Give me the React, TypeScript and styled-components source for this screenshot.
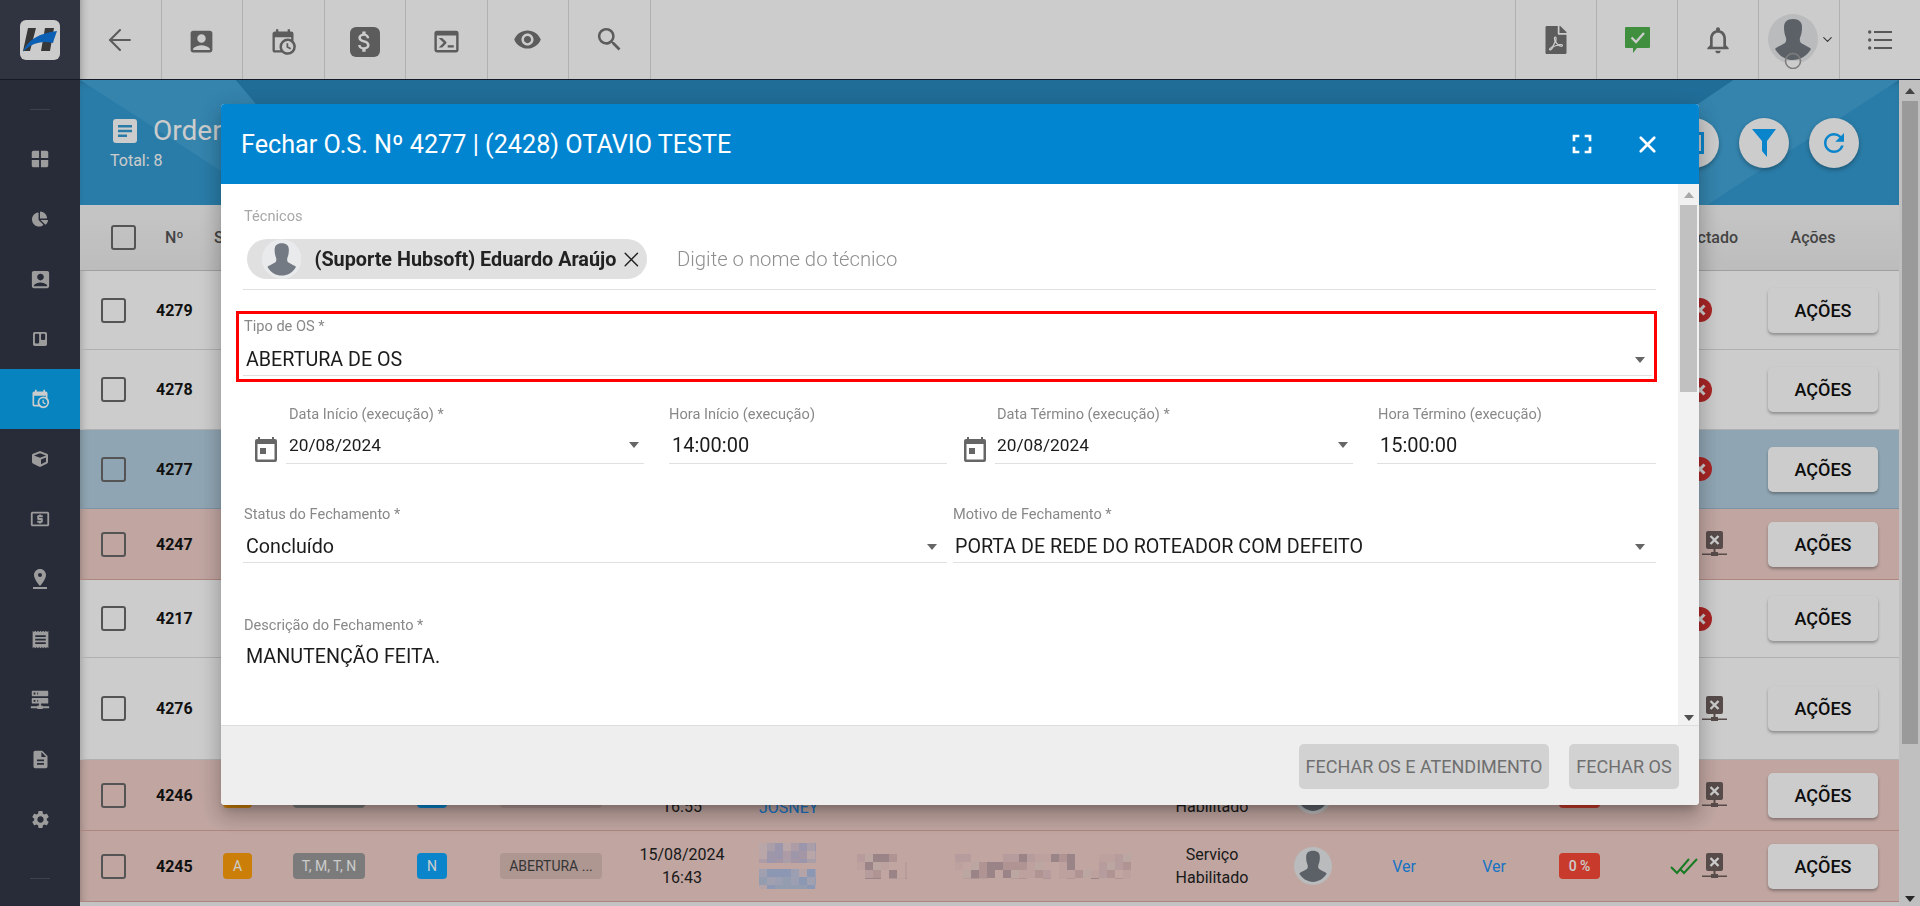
import React from 'react'
import styled, {createGlobalStyle} from 'styled-components'
import {ArrowLeft, ChevronDown, X} from 'lucide-react'
import {
    MdAccountBox, MdVisibility, MdWindow, MdLocalAtm, MdPinDrop, MdReceipt, MdSearch, MdNotificationsNone,
    MdDescription, MdSettings, MdFullscreen, MdRefresh, MdAttachMoney
} from 'react-icons/md'
import {FaChartPie, FaTrello, FaCube, FaFilePdf} from 'react-icons/fa'

const GlobalStyle = createGlobalStyle`
    * { box-sizing: border-box; }
    html, body { margin: 0; padding: 0; height: 100%; overflow: hidden; }
    body { font-family: Roboto, "Liberation Sans", sans-serif; color: #111; background: #fff; }
`

const CALENDAR_CLOCK = 'M15,13H16.5V15.82L18.94,17.23L18.19,18.53L15,16.69V13M19,8H5V19H9.67C9.24,18.09 9,17.07 9,16A7,7 0 0,1 16,9C17.07,9 18.09,9.24 19,9.67V8M5,21C3.89,21 3,20.1 3,19V5C3,3.89 3.89,3 5,3H6V1H8V3H16V1H18V3H19A2,2 0 0,1 21,5V11.1C22.24,12.36 23,14.09 23,16A7,7 0 0,1 16,23C14.09,23 12.36,22.24 11.1,21H5M16,11.15A4.85,4.85 0 0,0 11.15,16C11.15,18.68 13.32,20.85 16,20.85A4.85,4.85 0 0,0 20.85,16C20.85,13.32 18.68,11.15 16,11.15Z'
const CONSOLE = 'M20,19V7H4V19H20M20,3A2,2 0 0,1 22,5V19A2,2 0 0,1 20,21H4A2,2 0 0,1 2,19V5C2,3.89 2.9,3 4,3H20M13,17V15H18V17H13M9.58,13L5.57,9H8.4L11.7,12.3C12.09,12.69 12.09,13.33 11.7,13.72L8.42,17H5.59L9.58,13Z'
const SERVER_NETWORK = 'M13,19H14A1,1 0 0,1 15,20H22V22H15A1,1 0 0,1 14,23H10A1,1 0 0,1 9,22H2V20H9A1,1 0 0,1 10,19H11V17H4A1,1 0 0,1 3,16V12A1,1 0 0,1 4,11H20A1,1 0 0,1 21,12V16A1,1 0 0,1 20,17H13V19M4,3H20A1,1 0 0,1 21,4V8A1,1 0 0,1 20,9H4A1,1 0 0,1 3,8V4A1,1 0 0,1 4,3M9,7H10V5H9V7M9,15H10V13H9V15M5,5V7H7V5H5M5,13V15H7V13H5Z'
const SILHOUETTE = 'M25 5c-6 0-9 3-9 8 0 2 0 4 .5 6 .3 2 1 3 1.5 5 .5 2 0 4-1 5-3 2-6 3-9 5l-1 1c4 7 11 11 18 11s14-4 18-11l-1-1c-3-2-6-3-9-5-1-1-1.5-3-1-5 .5-2 1.2-3 1.5-5 .5-2 .5-4 .5-6 0-5-3-8-9-8z'

function MdiIcon({d, size}: {d: string; size: number}) {
    return <svg width={size} height={size} viewBox="0 0 24 24" fill="currentColor"><path d={d} /></svg>
}

function Logo() {
    return (
        <svg width="40" height="40" viewBox="0 0 40 40">
            <rect width="40" height="40" rx="6" fill="#fff" />
            <path d="M8 8h8l-6 23H3zM25 8h9l-4 23h-9z" fill="#454545" />
            <path d="M3 32C7 20 20 13 37 11 36 14 34 19 33 23 22 20 11 23 3 32Z" fill="#0f78e0" />
        </svg>
    )
}

function Avatar({size, ring}: {size: number; ring?: boolean}) {
    return (
        <svg width={size} height={ring ? size + 5 : size} viewBox={ring ? '0 0 50 55' : '0 0 50 50'}>
            <circle cx="25" cy="25" r="25" fill="#e8eaec" />
            <clipPath id={ring ? 'av-ring' : 'av-plain'}><circle cx="25" cy="25" r="25" /></clipPath>
            <path d={SILHOUETTE} fill="#747a83" clipPath={`url(#${ring ? 'av-ring' : 'av-plain'})`} />
            {ring && <path d="M17 47a8 8 0 0 0 16 0z" fill="#fff" />}
            {ring && <circle cx="25" cy="47" r="7.500" fill="none" stroke="#9d9d9d" strokeWidth="1.6" />}
        </svg>
    )
}

function ChatCheck() {
    return (
        <svg width="25" height="26" viewBox="0 0 25 26">
            <path d="M1 0h23a1 1 0 0 1 1 1v19a1 1 0 0 1-1 1H12l-4 5v-5H1a1 1 0 0 1-1-1V1a1 1 0 0 1 1-1z" fill="#4fb34f" />
            <path d="M6.500 10.500l4.500 4.500 8-9" fill="none" stroke="#fff" strokeWidth="2.4" />
        </svg>
    )
}

function Dollar() {
    return <DollarBox><MdAttachMoney size={27} /></DollarBox>
}

function ListIcon() {
    return (
        <svg width="24" height="20" viewBox="0 0 24 20" fill="#6e6e6e">
            <circle cx="1.7" cy="2" r="1.7" /><circle cx="1.7" cy="10" r="1.7" /><circle cx="1.7" cy="18" r="1.7" />
            <rect x="6" y="1" width="18" height="2" /><rect x="6" y="9" width="18" height="2" /><rect x="6" y="17" width="18" height="2" />
        </svg>
    )
}

function DocBadge() {
    return (
        <svg width="24" height="24" viewBox="0 0 24 24">
            <rect width="24" height="24" rx="3" fill="#fff" />
            <path d="M5 6h14v2.400H5zM5 10.800h14v2.400H5zM5 15.600h9V18H5z" fill="#349bd2" />
        </svg>
    )
}

function FilterIcon() {
    return <svg width="24" height="28" viewBox="0 0 24 28"><path d="M0 0h24l-9 12v16l-5-6V12z" fill="#0da7ff" /></svg>
}

function CalendarIcon() {
    return (
        <svg width="22" height="25" viewBox="0 0 22 25">
            <path d="M3 0h2v2h12V0h2v2h1a2 2 0 0 1 2 2v19a2 2 0 0 1-2 2H2a2 2 0 0 1-2-2V4a2 2 0 0 1 2-2h1z" fill="#666" />
            <rect x="2.500" y="7" width="17" height="15.500" fill="#fff" />
            <rect x="5" y="11" width="6" height="6" fill="#666" />
        </svg>
    )
}

function NetOff() {
    return (
        <svg width="25" height="26" viewBox="0 0 25 26">
            <rect x="4" y="0" width="17" height="18" rx="2" fill="#6d5f5d" />
            <path d="M8.500 5l8 8M16.500 5l-8 8" stroke="#fff" strokeWidth="2.4" />
            <path d="M11.500 18h2v4h-2zM0 22.500h25v1.500H0zM9 21h7v4H9z" fill="#6d5f5d" />
        </svg>
    )
}

function RedX() {
    return (
        <svg width="24" height="24" viewBox="0 0 24 24">
            <circle cx="12" cy="12" r="12" fill="#d32f2f" />
            <path d="M7.500 7.500l9 9M16.500 7.500l-9 9" stroke="#fff" strokeWidth="3" />
        </svg>
    )
}

function DoubleCheck() {
    return (
        <svg width="28" height="18" viewBox="0 0 28 18" fill="none">
            <path d="M1 10l6 6L19 2" stroke="#1f9a2e" strokeWidth="2" />
            <path d="M10 12l4 4L27 2" stroke="#1f9a2e" strokeWidth="2" />
        </svg>
    )
}

function Mosaic({w, h, cell, colors, seed}: {w: number; h: number; cell: number; colors: string[]; seed: number}) {
    const rects = []
    let s = seed
    for (let y = 0; y < h; y += cell) {
        for (let x = 0; x < w; x += cell) {
            s = (s * 137 + 59) % 1009
            rects.push(<rect key={`${x}-${y}`} x={x} y={y} width={cell} height={cell} fill={colors[s % colors.length]} />)
        }
    }
    return <svg width={w} height={h}>{rects}</svg>
}

const topLeft = [
    {drop: 0, icon: <ArrowLeft size={34} strokeWidth={1.5} />},
    {drop: 2, icon: <MdAccountBox size={29} />},
    {drop: 2, icon: <MdiIcon d={CALENDAR_CLOCK} size={28} />},
    {drop: 2, icon: <Dollar />},
    {drop: 2, icon: <MdiIcon d={CONSOLE} size={29} />},
    {drop: 0, icon: <MdVisibility size={29} />},
    {drop: 0, icon: <MdSearch size={31} />},
]

const sideIcons = [
    <MdWindow size={22} />, <FaChartPie size={16} />, <MdAccountBox size={23} />, <FaTrello size={16} />,
    <MdiIcon d={CALENDAR_CLOCK} size={20} />, <FaCube size={16} />, <MdLocalAtm size={22} />, <MdPinDrop size={24} />,
    <MdReceipt size={21} />, <MdiIcon d={SERVER_NETWORK} size={22} />, <MdDescription size={21} />, <MdSettings size={21} />,
]

type Tone = 'plain' | 'blue' | 'red'
interface RowData {
    id: string;
    height: number;
    tone: Tone;
    state: 'x' | 'net' | 'net-check';
    date?: string;
    time?: string;
    name?: string;
}

const rows: RowData[] = [
    {id: '4279', height: 79, tone: 'plain', state: 'x'},
    {id: '4278', height: 80, tone: 'plain', state: 'x'},
    {id: '4277', height: 79, tone: 'blue', state: 'x'},
    {id: '4247', height: 71, tone: 'red', state: 'net'},
    {id: '4217', height: 78, tone: 'plain', state: 'x'},
    {id: '4276', height: 102, tone: 'plain', state: 'net'},
    {id: '4246', height: 71, tone: 'red', state: 'net', date: '15/08/2024', time: '16:55', name: 'JOSNEY'},
    {id: '4245', height: 71, tone: 'red', state: 'net-check', date: '15/08/2024', time: '16:43'},
]

const lilac = ['#d9c4cf', '#cdbccf', '#c6bdd4', '#d5c6d2', '#c2bcd6', '#e6d0d2']
const blues = ['#b9c3dc', '#aebde0', '#c2c7de', '#c9c8dc', '#e2ced2']
const rose = ['#f0cfc9', '#eccac6', '#dcbaba', '#ecd0cb', '#c2a6aa', '#e4c4c3', '#f0cfc9']

export default function App() {
    return (
        <>
            <GlobalStyle />
            <Page>
                <TopBar>
                    <LogoBlock><Logo /></LogoBlock>
                    <ToolGroup>
                        {topLeft.map((t, i) => <ToolButton key={i} $drop={t.drop}>{t.icon}</ToolButton>)}
                    </ToolGroup>
                    <ToolGroupRight>
                        <ToolButtonRight><FaFilePdf size={28} /></ToolButtonRight>
                        <ToolButtonRight><ChatCheck /></ToolButtonRight>
                        <ToolButtonRight><MdNotificationsNone size={32} /></ToolButtonRight>
                        <UserButton><Avatar size={50} ring /><ChevronDown size={15} strokeWidth={1.8} /></UserButton>
                        <ToolButtonRight><ListIcon /></ToolButtonRight>
                    </ToolGroupRight>
                </TopBar>
                <Body>
                    <Sidebar>
                        <SideRule />
                        {sideIcons.map((icon, i) => <SideItem key={i} $active={i === 4}>{icon}</SideItem>)}
                        <SideRuleBottom />
                    </Sidebar>
                    <Main>
                        <Band>
                            <BandText>
                                <BandTitle><DocBadge /><BandName>Ordens de Serviço</BandName></BandTitle>
                                <BandTotal>Total: 8</BandTotal>
                            </BandText>
                            <BandActions>
                                <RoundButton><SquareMark /></RoundButton>
                                <RoundButton><FilterIcon /></RoundButton>
                                <RoundButton><MdRefresh size={30} /></RoundButton>
                            </BandActions>
                        </Band>
                        <HeadRow>
                            <HeadCheck><CheckBox /></HeadCheck>
                            <HeadNum>Nº</HeadNum>
                            <HeadGrow>Status</HeadGrow>
                            <HeadConnected>Conectado</HeadConnected>
                            <HeadActions>Ações</HeadActions>
                        </HeadRow>
                        {rows.map(r => (
                            <Row key={r.id} $height={r.height} $tone={r.tone}>
                                <Cell><RowCheck /></Cell>
                                <IdCell>{r.id}</IdCell>
                                {r.date ? <>
                                    <Cell><Pill $bg="#ff9f0a" $w={29}>A</Pill></Cell>
                                    <Cell><Pill $bg="#9a9a9a" $w={72}>T, M, T, N</Pill></Cell>
                                    <Cell><Pill $bg="#0da7ff" $w={30}>N</Pill></Cell>
                                    <Cell><TypePill>ABERTURA ...</TypePill></Cell>
                                    <CenterCell>{r.date}<br />{r.time}</CenterCell>
                                    {r.name
                                        ? <NameCell><NameLink>{r.name}</NameLink></NameCell>
                                        : <NameCell>
                                            <Mosaic w={57} h={20} cell={8} colors={lilac} seed={11} />
                                            <Mosaic w={57} h={20} cell={8} colors={blues} seed={37} />
                                        </NameCell>}
                                    <BlurCell $pad={17}>{!r.name && <Mosaic w={50} h={25} cell={8} colors={rose} seed={53} />}</BlurCell>
                                    <BlurCell $pad={5}>{!r.name && <Mosaic w={176} h={25} cell={8} colors={rose} seed={71} />}</BlurCell>
                                    <CenterCell>Serviço<br />Habilitado</CenterCell>
                                    <CenterCell><Avatar size={38} /></CenterCell>
                                    <CenterCell><VerLink>Ver</VerLink></CenterCell>
                                    <CenterCell><VerLink>Ver</VerLink></CenterCell>
                                    <CenterCell><Percent>0 %</Percent></CenterCell>
                                </> : <HiddenSpan />}
                                <StateCell $wide={r.state === 'x'}>
                                    {r.state === 'x' && <RedX />}
                                    {r.state === 'net-check' && <DoubleCheck />}
                                    {r.state !== 'x' && <NetOff />}
                                </StateCell>
                                <Cell><ActionButton>AÇÕES</ActionButton></Cell>
                            </Row>
                        ))}
                        <RowEdge />
                    </Main>
                    <PageScroll>
                        <ArrowUp $color="#555" />
                        <PageThumb />
                        <ArrowDown $color="#333" />
                    </PageScroll>
                </Body>
            </Page>

            <Backdrop>
                <Modal>
                    <ModalHeader>
                        <ModalTitle>Fechar O.S. Nº 4277 | (2428) OTAVIO TESTE</ModalTitle>
                        <HeaderTools>
                            <MdFullscreen size={32} />
                            <X size={27} strokeWidth={2.4} />
                        </HeaderTools>
                    </ModalHeader>
                    <ModalBody>
                        <Form>
                            <TechBlock>
                                <LightLabel>Técnicos</LightLabel>
                                <ChipRow>
                                    <Chip>
                                        <Avatar size={40} />
                                        <ChipName>(Suporte Hubsoft) Eduardo Araújo</ChipName>
                                        <X size={25} strokeWidth={1.4} />
                                    </Chip>
                                    <Placeholder>Digite o nome do técnico</Placeholder>
                                </ChipRow>
                            </TechBlock>
                            <Highlight>
                                <Label $inset={1}>Tipo de OS *</Label>
                                <ValueLine $top={14} $bottom={3}>
                                    <Value $inset={3}>ABERTURA DE OS</Value>
                                    <Caret $right={7} />
                                </ValueLine>
                            </Highlight>
                            <DateRow>
                                <CalendarSlot><CalendarIcon /></CalendarSlot>
                                <Field $width={358}>
                                    <Label $inset={3}>Data Início (execução) *</Label>
                                    <ValueLine $top={11} $bottom={6}>
                                        <Value $inset={3} $size={17.3}>20/08/2024</Value>
                                        <Caret $right={5} />
                                    </ValueLine>
                                </Field>
                                <Field $width={278} $gap={25}>
                                    <Label>Hora Início (execução)</Label>
                                    <ValueLine $top={11} $bottom={6}><Value $inset={3} $size={20}>14:00:00</Value></ValueLine>
                                </Field>
                                <CalendarSlot $gap={5}><CalendarIcon /></CalendarSlot>
                                <Field $width={358}>
                                    <Label $inset={2}>Data Término (execução) *</Label>
                                    <ValueLine $top={11} $bottom={6}>
                                        <Value $inset={2} $size={17.3}>20/08/2024</Value>
                                        <Caret $right={5} />
                                    </ValueLine>
                                </Field>
                                <Field $width={279} $gap={24}>
                                    <Label $inset={1}>Hora Término (execução)</Label>
                                    <ValueLine $top={11} $bottom={6}><Value $inset={3} $size={20}>15:00:00</Value></ValueLine>
                                </Field>
                            </DateRow>
                            <StatusRow>
                                <Field $width={704}>
                                    <Label $inset={1}>Status do Fechamento *</Label>
                                    <ValueLine $top={13} $bottom={3}>
                                        <Value $inset={3}>Concluído</Value>
                                        <Caret $right={10} />
                                    </ValueLine>
                                </Field>
                                <Field $width={703} $gap={6}>
                                    <Label>Motivo de Fechamento *</Label>
                                    <ValueLine $top={13} $bottom={3}>
                                        <Value $inset={2}>PORTA DE REDE DO ROTEADOR COM DEFEITO</Value>
                                        <Caret $right={11} />
                                    </ValueLine>
                                </Field>
                            </StatusRow>
                            <DescBlock>
                                <Label $inset={1}>Descrição do Fechamento *</Label>
                                <DescValue>MANUTENÇÃO FEITA.</DescValue>
                            </DescBlock>
                        </Form>
                        <BodyScroll>
                            <ArrowUp $color="#a8a8a8" />
                            <BodyThumb />
                            <ArrowDown $color="#505050" />
                        </BodyScroll>
                    </ModalBody>
                    <ModalFooter>
                        <FooterButton $width={250}>FECHAR OS E ATENDIMENTO</FooterButton>
                        <FooterButton $width={110}>FECHAR OS</FooterButton>
                    </ModalFooter>
                </Modal>
            </Backdrop>
        </>
    )
}

const Page = styled.div`
    width: 1920px;
    height: 906px;
    display: flex;
    flex-direction: column;
    overflow: hidden;
`
const TopBar = styled.header`
    height: 80px;
    flex: none;
    display: flex;
    background: #fff;
    border-bottom: 1px solid #1c2030;
`
const LogoBlock = styled.div`
    width: 80px;
    display: flex;
    align-items: center;
    justify-content: center;
    background: #3c4050;
`
const ToolGroup = styled.div`
    display: flex;
    flex: 1;
    box-shadow: inset 10px 0 10px -10px rgba(0,0,0,.35);
`
const ToolButton = styled.div<{$drop: number}>`
    width: 81.5px;
    display: flex;
    align-items: center;
    justify-content: center;
    padding-top: ${p => p.$drop * 2}px;
    color: #737373;
    border-right: 1px solid #dcdcdc;
`
const DollarBox = styled.div`
    width: 30px;
    height: 30px;
    border-radius: 6px;
    background: #737373;
    color: #fff;
    display: flex;
    align-items: center;
    justify-content: center;
`
const ToolGroupRight = styled.div`
    display: flex;
`
const ToolButtonRight = styled.div`
    width: 81px;
    display: flex;
    align-items: center;
    justify-content: center;
    color: #737373;
    border-left: 1px solid #dcdcdc;
`
const UserButton = styled(ToolButtonRight)`
    gap: 2px;
    padding-left: 4px;
    color: #444;
    & > svg:first-child { margin-top: 4px; flex: none; }
`
const Body = styled.div`
    flex: 1;
    display: flex;
    min-height: 0;
`
const Sidebar = styled.nav`
    width: 80px;
    flex: none;
    background: #323646;
    display: flex;
    flex-direction: column;
    align-items: center;
    color: #c4c4c4;
`
const SideRule = styled.div`
    width: 20px;
    height: 1px;
    margin: 29px 0 19px;
    background: #4e5364;
`
const SideRuleBottom = styled(SideRule)`
    margin: 29px 0 0;
`
const SideItem = styled.div<{$active?: boolean}>`
    width: 100%;
    height: 60px;
    flex: none;
    display: flex;
    align-items: center;
    justify-content: center;
    background: ${p => p.$active ? '#09a4ef' : 'transparent'};
    color: ${p => p.$active ? '#fff' : 'inherit'};
`
const Main = styled.main`
    flex: 1;
    min-width: 0;
    overflow: hidden;
`
const Band = styled.section`
    position: relative;
    height: 125px;
    display: flex;
    align-items: center;
    justify-content: space-between;
    padding: 0 40px 0 30px;
    background: #349bd2;
    color: #fff;
    box-shadow: inset 0 6px 8px -6px rgba(0,0,0,.35);
    &::before {
        content: '';
        position: absolute;
        inset: 0;
        background: #41a5d9;
        clip-path: polygon(0 0, 156px 0, 260px 125px, 194px 125px, 0 0, 1653px 0, 1819px 0, 1627px 125px, 1470px 125px, 1653px 0, 0 0);
    }
    &::after {
        content: '';
        position: absolute;
        inset: 0;
        background: #2889bf;
        clip-path: polygon(156px 0, 1653px 0, 1470px 125px, 260px 125px);
    }
`
const BandText = styled.div`
    position: relative;
    z-index: 1;
    margin-top: -2px;
`
const BandTitle = styled.div`
    display: flex;
    align-items: center;
    gap: 16px;
    margin-left: 3px;
    font-size: 28px;
    line-height: 34px;
`
const BandName = styled.span`
    width: 68px;
    overflow: hidden;
    white-space: nowrap;
`
const BandTotal = styled.div`
    font-size: 16px;
    margin-top: 3px;
`
const BandActions = styled.div`
    position: relative;
    z-index: 1;
    display: flex;
    gap: 20px;
`
const RoundButton = styled.div`
    width: 50px;
    height: 50px;
    border-radius: 50%;
    background: #fff;
    color: #0da7ff;
    display: flex;
    align-items: center;
    justify-content: center;
    box-shadow: 0 2px 4px rgba(0,0,0,.3);
`
const SquareMark = styled.div`
    width: 20px;
    height: 22px;
    border: 3px solid #0da7ff;
`
const HeadRow = styled.div`
    height: 66px;
    display: flex;
    align-items: center;
    background: linear-gradient(#f7f7f7, #ececec);
    border-bottom: 1px solid #c8c8c8;
    font-size: 16px;
    font-weight: 500;
    color: #555;
`
const HeadCheck = styled.div`
    width: 85px;
    padding-left: 31px;
`
const HeadNum = styled.div`
    width: 49px;
`
const HeadGrow = styled.div`
    flex: 1;
`
const HeadConnected = styled.div`
    padding-right: 30px;
`
const HeadActions = styled.div`
    width: 90px;
    margin-right: 41px;
    text-align: center;
`
const CheckBox = styled.div`
    width: 25px;
    height: 25px;
    border: 2px solid #6a6a6a;
    border-radius: 3px;
`
const RowCheck = styled(CheckBox)`
    margin-left: 21px;
`
const toneBg = {plain: '#ffffff', blue: '#b4cfe0', red: '#f0cfc9'}
const toneLine = {plain: '#dcdcdc', blue: '#9db8cc', red: '#d9a8a0'}
const Row = styled.div<{$height: number; $tone: Tone}>`
    height: ${p => p.$height}px;
    display: grid;
    grid-template-columns: 76px 67px 70px 124px 83px 140px 84px 116px 110px 210px 104px 98px 84px 96px 75px 151px 131px;
    align-items: center;
    background: ${p => toneBg[p.$tone]};
    border-bottom: 1px solid ${p => toneLine[p.$tone]};
    box-shadow: inset 10px 0 10px -10px rgba(0,0,0,.3);
`
const RowEdge = styled.div`
    height: 4px;
    background: #f4f4f4;
`
const HiddenSpan = styled.div`
    grid-column: 3 / 16;
`
const Cell = styled.div`
    display: flex;
    align-items: center;
`
const IdCell = styled.div`
    font-size: 16px;
    font-weight: 700;
    color: #151515;
`
const CenterCell = styled.div`
    display: flex;
    flex-direction: column;
    align-items: center;
    text-align: center;
    font-size: 16px;
    line-height: 23px;
    color: #222;
`
const NameCell = styled.div`
    display: flex;
    flex-direction: column;
    gap: 6px;
    padding-left: 35px;
`
const NameLink = styled.span`
    font-size: 16px;
    color: #2090f5;
    margin-top: 24px;
`
const BlurCell = styled.div<{$pad: number}>`
    display: flex;
    padding-left: ${p => p.$pad}px;
`
const Pill = styled.div<{$bg: string; $w: number}>`
    width: ${p => p.$w}px;
    height: 26px;
    border-radius: 4px;
    background: ${p => p.$bg};
    color: #fff;
    font-size: 14px;
    display: flex;
    align-items: center;
    justify-content: center;
`
const TypePill = styled.div`
    width: 102px;
    height: 26px;
    border-radius: 4px;
    background: rgba(0,0,0,.09);
    color: #444;
    font-size: 14px;
    display: flex;
    align-items: center;
    justify-content: center;
    white-space: nowrap;
`
const VerLink = styled.span`
    color: #2090f5;
`
const Percent = styled.div`
    width: 41px;
    height: 26px;
    border-radius: 4px;
    background: #fa4936;
    color: #fff;
    font-size: 14px;
    font-weight: 500;
    display: flex;
    align-items: center;
    justify-content: center;
`
const StateCell = styled.div<{$wide: boolean}>`
    display: flex;
    align-items: center;
    justify-content: flex-end;
    gap: 4px;
    padding-right: ${p => p.$wide ? 56 : 41}px;
`
const ActionButton = styled.div`
    width: 110px;
    height: 45px;
    border-radius: 5px;
    background: #fff;
    box-shadow: 0 2px 3px rgba(0,0,0,.3);
    font-size: 18px;
    font-weight: 500;
    color: #111;
    display: flex;
    align-items: center;
    justify-content: center;
`
const PageScroll = styled.div`
    width: 21px;
    flex: none;
    display: flex;
    flex-direction: column;
    align-items: center;
    background: #f1f1f1;
`
const PageThumb = styled.div`
    width: 16px;
    height: 643px;
    background: #c1c1c1;
`
const ArrowUp = styled.div<{$color: string}>`
    width: 0;
    height: 0;
    margin: 8px 0 7px;
    border-left: 5px solid transparent;
    border-right: 5px solid transparent;
    border-bottom: 6px solid ${p => p.$color};
`
const ArrowDown = styled.div<{$color: string}>`
    width: 0;
    height: 0;
    margin: auto 0 4px;
    border-left: 5px solid transparent;
    border-right: 5px solid transparent;
    border-top: 6px solid ${p => p.$color};
`
const Backdrop = styled.div`
    position: fixed;
    inset: 0;
    z-index: 10;
    display: flex;
    align-items: flex-start;
    padding: 104px 0 0 221px;
    background: rgba(0,0,0,.2);
`
const Modal = styled.div`
    width: 1478px;
    height: 701px;
    flex: none;
    display: flex;
    flex-direction: column;
    border-radius: 4px;
    overflow: hidden;
    background: #fff;
    box-shadow: 0 7px 8px -4px rgba(0,0,0,.2), 0 13px 19px 2px rgba(0,0,0,.14), 0 5px 24px 4px rgba(0,0,0,.12);
`
const ModalHeader = styled.div`
    height: 80px;
    flex: none;
    display: flex;
    align-items: center;
    justify-content: space-between;
    padding: 0 38px 0 20px;
    background: #0285d1;
    color: #fff;
`
const ModalTitle = styled.h2`
    margin: 0;
    font-size: 25.2px;
    font-weight: 400;
`
const HeaderTools = styled.div`
    display: flex;
    align-items: center;
    gap: 36px;
`
const ModalBody = styled.div`
    flex: 1;
    min-height: 0;
    display: flex;
`
const Form = styled.div`
    flex: 1;
    padding: 24px 22px 0;
    overflow: hidden;
`
const LightLabel = styled.div`
    font-size: 14.6px;
    line-height: 16px;
    color: #a8a8a8;
    padding-left: 1px;
`
const TechBlock = styled.div`
    border-bottom: 1px solid #e0e0e0;
    padding-bottom: 10px;
`
const ChipRow = styled.div`
    display: flex;
    align-items: center;
    margin-top: 15px;
`
const Chip = styled.div`
    height: 40px;
    width: 400px;
    margin-left: 4px;
    padding: 0 3px 0 15px;
    display: flex;
    align-items: center;
    flex: none;
    border-radius: 20px;
    background: #e0e0e0;
    color: #222;
`
const ChipName = styled.span`
    margin: 0 3px 0 13px;
    font-size: 19.8px;
    font-weight: 700;
    white-space: nowrap;
`
const Placeholder = styled.span`
    margin-left: 30px;
    font-size: 20.3px;
    font-weight: 300;
    color: #8f8f8f;
`
const Highlight = styled.div`
    margin: 21px -1px 0 -7px;
    padding: 4px 2px 3px 4px;
    border: 3px solid #ff0000;
`
const Label = styled.div<{$inset?: number}>`
    font-size: 14.6px;
    line-height: 16px;
    color: #888;
    padding-left: ${p => p.$inset ?? 0}px;
    white-space: nowrap;
`
const ValueLine = styled.div<{$top: number; $bottom: number}>`
    margin-top: ${p => p.$top}px;
    padding-bottom: ${p => p.$bottom}px;
    display: flex;
    align-items: center;
    justify-content: space-between;
    border-bottom: 1px solid #e0e0e0;
`
const Value = styled.span<{$inset?: number; $size?: number}>`
    font-size: ${p => p.$size ?? 19.7}px;
    line-height: 24px;
    color: #1c1c1c;
    padding-left: ${p => p.$inset ?? 0}px;
    white-space: nowrap;
`
const Caret = styled.span<{$right: number}>`
    width: 0;
    height: 0;
    margin-right: ${p => p.$right}px;
    border-left: 5px solid transparent;
    border-right: 5px solid transparent;
    border-top: 6px solid #666;
`
const DateRow = styled.div`
    display: flex;
    margin-top: 24px;
`
const CalendarSlot = styled.div<{$gap?: number}>`
    width: 43px;
    flex: none;
    padding: 31px 0 0 12px;
    margin-left: ${p => p.$gap ?? 0}px;
`
const Field = styled.div<{$width: number; $gap?: number}>`
    width: ${p => p.$width}px;
    flex: none;
    margin-left: ${p => p.$gap ?? 0}px;
`
const StatusRow = styled.div`
    display: flex;
    margin-top: 40px;
`
const DescBlock = styled.div`
    margin-top: 54px;
`
const DescValue = styled.div`
    margin-top: 12px;
    padding-left: 3px;
    font-size: 19.7px;
    line-height: 24px;
    color: #1c1c1c;
`
const BodyScroll = styled.div`
    width: 21px;
    flex: none;
    display: flex;
    flex-direction: column;
    align-items: center;
    background: #f1f1f1;
`
const BodyThumb = styled.div`
    width: 17px;
    height: 187px;
    background: #c1c1c1;
`
const ModalFooter = styled.div`
    height: 80px;
    flex: none;
    display: flex;
    justify-content: flex-end;
    gap: 20px;
    padding: 18px 20px 0 0;
    background: #eeeeee;
    border-top: 1px solid #dedede;
`
const FooterButton = styled.div<{$width: number}>`
    width: ${p => p.$width}px;
    height: 45px;
    border-radius: 5px;
    background: #d2d2d2;
    color: #6f6f6f;
    font-size: 18px;
    display: flex;
    align-items: center;
    justify-content: center;
    white-space: nowrap;
`
